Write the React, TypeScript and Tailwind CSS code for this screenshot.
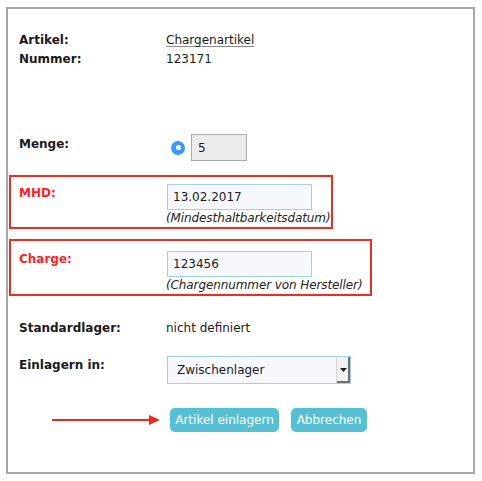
import React from "react";

type RowProps = {
  label: string;
  red?: boolean;
  labelTop?: string;
  children: React.ReactNode;
};

function Row({ label, red, labelTop = "mt-0", children }: RowProps) {
  return (
    <div className="flex items-start">
      <div
        className={`w-[147px] shrink-0 font-bold leading-[19px] ${labelTop} ${
          red ? "text-[#ff1e1e]" : "text-[#1a1a1a]"
        }`}
      >
        {label}
      </div>
      <div className="flex flex-col items-start">{children}</div>
    </div>
  );
}

function TextField({ value }: { value: string }) {
  return (
    <input
      readOnly
      value={value}
      className="ml-[1px] h-[26px] w-[145px] border border-[#9fd2de] bg-[#f7f8fe] px-[5px] text-[12px] text-[#1a1a1a] outline-none"
    />
  );
}

function Hint({ children }: { children: React.ReactNode }) {
  return <div className="leading-[16px] italic tracking-[-0.1px] text-[#222]">{children}</div>;
}

export default function App() {
  return (
    <div className="h-[481px] w-[482px] bg-white pl-[6px] pt-[7px] text-[12px] text-[#1a1a1a] [font-family:'DejaVu_Sans',Verdana,sans-serif]">
      <div className="flex h-[467px] w-[469px] flex-col border-2 border-[#a8a8a8] pt-[22px]">
        <div className="pl-[11px]">
          <Row label="Artikel:">
            <span className="leading-[19px] underline decoration-[#8a8a8a] underline-offset-2">
              Chargenartikel
            </span>
          </Row>
          <Row label="Nummer:">
            <span className="leading-[19px]">123171</span>
          </Row>
        </div>

        <div className="mt-[65px] pl-[11px]">
          <Row label="Menge:" labelTop="mt-[1px]">
            <div className="flex items-center">
              <span className="ml-[5px] flex h-[14px] w-[14px] items-center justify-center rounded-full bg-[#3d97f7]">
                <span className="h-[5px] w-[5px] rounded-full bg-white" />
              </span>
              <input
                readOnly
                value="5"
                className="ml-[6px] h-[27px] w-[56px] border border-[#a9a9a9] bg-[#ebebeb] px-[6px] text-[12px] text-[#1a1a1a] outline-none"
              />
            </div>
          </Row>
        </div>

        <div className="ml-[1px] mt-[14px] w-[324px] border-2 border-[#ef2b22] pb-[1px] pl-[8px] pt-[7px]">
          <Row label="MHD:" red labelTop="-mt-[0.5px]">
            <TextField value="13.02.2017" />
            <Hint>(Mindesthaltbarkeitsdatum)</Hint>
          </Row>
        </div>

        <div className="ml-[1px] mt-[10px] w-[363px] border-2 border-[#ef2b22] pb-[1px] pl-[8px] pt-[10px]">
          <Row label="Charge:" red labelTop="-mt-[1.5px]">
            <TextField value="123456" />
            <Hint>(Chargennummer von Hersteller)</Hint>
          </Row>
        </div>

        <div className="mt-[23px] pl-[11px]">
          <Row label="Standardlager:">
            <span className="leading-[19px]">nicht definiert</span>
          </Row>
        </div>

        <div className="mt-[18px] pl-[11px]">
          <Row label="Einlagern in:">
            <div className="ml-[1px] flex h-[28px] w-[184px] items-stretch border border-[#9fd2de] bg-[#f7f8fe]">
              <span className="flex flex-1 items-center pl-[9px] text-[#1a1a1a]">
                Zwischenlager
              </span>
              <span className="flex w-[14px] items-center justify-center border-l border-[#d6d6d6] bg-[#f2f2f2] shadow-[inset_-2px_-2px_0_#6f6f6f]">
                <svg width="7" height="4" viewBox="0 0 7 4" className="-mt-[1px] -ml-[1px]">
                  <path d="M0 0h7L3.5 4z" fill="#222" />
                </svg>
              </span>
            </div>
          </Row>
        </div>

        <div className="mt-[24px] flex items-center pl-[11px]">
          <div className="flex w-[147px] shrink-0 items-center">
            <svg width="108" height="10" viewBox="0 0 108 10" className="ml-[33px]">
              <line x1="0" y1="5" x2="100" y2="5" stroke="#ee2a1f" strokeWidth="2" />
              <path d="M97 0L108 5L97 10z" fill="#ee2a1f" />
            </svg>
          </div>
          <button className="ml-[4px] h-[24px] w-[109px] rounded-[5px] bg-[#55bfd3] text-[12px] text-white">
            Artikel einlagern
          </button>
          <button className="ml-[12px] h-[24px] w-[76px] rounded-[5px] bg-[#55bfd3] text-[12px] text-white">
            Abbrechen
          </button>
        </div>
      </div>
    </div>
  );
}
